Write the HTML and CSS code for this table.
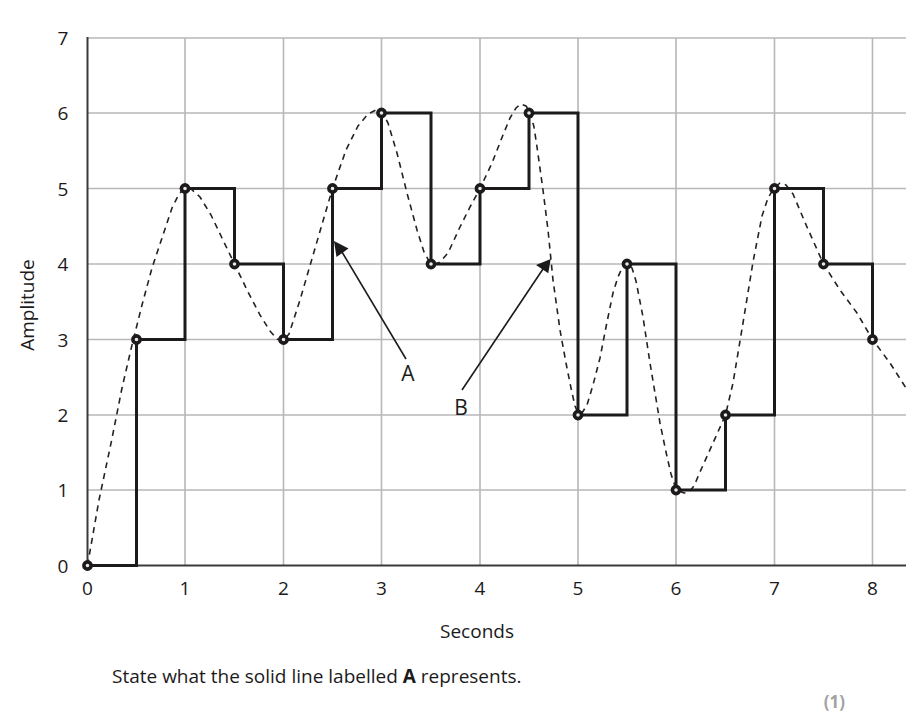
FILE: index.html
```html
<!DOCTYPE html>
<html lang="en">
<head>
<meta charset="utf-8">
<title>Sampling graph</title>
<link rel="stylesheet" href="styles.css">
</head>
<body>
<main class="sheet">
  <svg class="chart" width="922" height="604" viewBox="0 0 922 604" xmlns="http://www.w3.org/2000/svg">
    <g class="grid">
      <line x1="185" y1="38" x2="185" y2="565.5"/>
      <line x1="283.5" y1="38" x2="283.5" y2="565.5"/>
      <line x1="381.5" y1="38" x2="381.5" y2="565.5"/>
      <line x1="480" y1="38" x2="480" y2="565.5"/>
      <line x1="578" y1="38" x2="578" y2="565.5"/>
      <line x1="676" y1="38" x2="676" y2="565.5"/>
      <line x1="774.5" y1="38" x2="774.5" y2="565.5"/>
      <line x1="872.5" y1="38" x2="872.5" y2="565.5"/>
      <line x1="87.5" y1="38" x2="906" y2="38"/>
      <line x1="87.5" y1="113" x2="906" y2="113"/>
      <line x1="87.5" y1="188.5" x2="906" y2="188.5"/>
      <line x1="87.5" y1="264" x2="906" y2="264"/>
      <line x1="87.5" y1="339.5" x2="906" y2="339.5"/>
      <line x1="87.5" y1="415" x2="906" y2="415"/>
      <line x1="87.5" y1="490" x2="906" y2="490"/>
    </g>
    <g class="axes">
      <line x1="87.5" y1="37" x2="87.5" y2="566.5"/>
      <line x1="86.5" y1="565.5" x2="906" y2="565.5"/>
    </g>
    <g class="ytick">
      <text x="63" y="45">7</text>
      <text x="63" y="120">6</text>
      <text x="63" y="195.5">5</text>
      <text x="63" y="271">4</text>
      <text x="63" y="346.5">3</text>
      <text x="63" y="422">2</text>
      <text x="63" y="497">1</text>
      <text x="63" y="572.5">0</text>
    </g>
    <g class="xtick">
      <text x="87.5" y="595">0</text>
      <text x="185" y="595">1</text>
      <text x="283.5" y="595">2</text>
      <text x="381.5" y="595">3</text>
      <text x="480" y="595">4</text>
      <text x="578" y="595">5</text>
      <text x="676" y="595">6</text>
      <text x="774.5" y="595">7</text>
      <text x="872.5" y="595">8</text>
    </g>
    <text class="ytitle" x="0" y="0" transform="translate(34 305) rotate(-90)">Amplitude</text>
    <polyline class="analog" points="87.5,565.5 99,500 111.7,440 122,388 132,345 142,305 152,268 163,235 172,208 179,194 185,188 191,189 200,197 211,215 222,238 234.5,264 248,292 260,315 270,331 277,339 283,341 289,334 300,300 316,245 332.5,188.5 346,150 358,126 368,114 376,110 382,112 388,123 397,153 407,193 417,230 424,252 429,261 434,264.5 440,262 448,253 460,227 470,207 480,188.5 492,163 503,135 510,118 516,108 521,104 526,106 530,112 534,127 537,147 543,190 548,230 553,280 560,330 566,363 571,388 575,406 578,413 582,413 587,405 593,385 600,358 607,322 613,293 618,277 622,268 627,263 632,268 636,281 643,317 650,363 660,423 666,452 671,474 675,486 679,491 684,493 689,492 694,486 700,472 713,443 725.5,415 733,383 743,323 753,262 762,216 768,198 774,188 780,183 786,185 793,194 807,227 823.5,264 840,290 857,313 872.5,339.5 890,363 906,388"/>
    <path class="digital" d="M87.5 565.5 H136.5 V339.5 H185 V188.5 H234.5 V264 H283.5 V339.5 H332.5 V188.5 H381.5 V113 H431 V264 H480 V188.5 H529 V113 H578 V415 H627 V264 H676 V490 H725.5 V415 H774.5 V188.5 H823.5 V264 H872.5 V339.5"/>
    <g class="samples">
      <circle cx="87.5" cy="565.5" r="3.6"/>
      <circle cx="136.5" cy="339.5" r="3.6"/>
      <circle cx="185" cy="188.5" r="3.6"/>
      <circle cx="234.5" cy="264" r="3.6"/>
      <circle cx="283.5" cy="339.5" r="3.6"/>
      <circle cx="332.5" cy="188.5" r="3.6"/>
      <circle cx="381.5" cy="113" r="3.6"/>
      <circle cx="431" cy="264" r="3.6"/>
      <circle cx="480" cy="188.5" r="3.6"/>
      <circle cx="529" cy="113" r="3.6"/>
      <circle cx="578" cy="415" r="3.6"/>
      <circle cx="627" cy="264" r="3.6"/>
      <circle cx="676" cy="490" r="3.6"/>
      <circle cx="725.5" cy="415" r="3.6"/>
      <circle cx="774.5" cy="188.5" r="3.6"/>
      <circle cx="823.5" cy="264" r="3.6"/>
      <circle cx="872.5" cy="339.5" r="3.6"/>
    </g>
    <g class="pointer">
      <line x1="406" y1="359" x2="342" y2="252"/>
      <polygon points="334,241 348.5,248.5 336.5,257"/>
      <line x1="462" y1="390" x2="543" y2="269"/>
      <polygon points="550.7,259 536,265 548.3,273.3"/>
    </g>
    <text class="callout" x="408" y="381">A</text>
    <text class="callout" x="461" y="415">B</text>
  </svg>
  <div class="x-title">Seconds</div>
  <p class="question">State what the solid line labelled <b>A</b> represents.</p>
  <div class="marks">(1)</div>
</main>
</body>
</html>
```

FILE: styles.css
```css
html, body {
  margin: 0;
  padding: 0;
  background: #ffffff;
}

body {
  font-family: "Open Sans", "Noto Sans", sans-serif;
  font-weight: 500;
  color: #1c1a1b;
}

.sheet {
  width: 922px;
  height: 722px;
  overflow: hidden;
}

.chart {
  display: block;
}

.grid line {
  stroke: #b7b7ba;
  stroke-width: 1.6;
}

.axes line {
  stroke: #3a3a3a;
  stroke-width: 2;
}

.ytick text,
.xtick text {
  font-family: "Open Sans", "Noto Sans", sans-serif;
  font-size: 19px;
  font-weight: 500;
  fill: #1c1a1b;
  text-anchor: middle;
}

.ytitle {
  font-family: "Open Sans", "Noto Sans", sans-serif;
  font-size: 19px;
  font-weight: 500;
  fill: #1c1a1b;
  text-anchor: middle;
}

.analog {
  fill: none;
  stroke: #222222;
  stroke-width: 1.6;
  stroke-dasharray: 6 5;
  stroke-linejoin: round;
}

.digital {
  fill: none;
  stroke: #1c1a1b;
  stroke-width: 3;
  stroke-linejoin: miter;
  stroke-linecap: square;
}

.samples circle {
  fill: #e8e8e8;
  stroke: #1c1a1b;
  stroke-width: 3.6;
}

.pointer line {
  stroke: #1c1a1b;
  stroke-width: 1.6;
}

.pointer polygon {
  fill: #1c1a1b;
}

.callout {
  font-family: "Open Sans", "Noto Sans", sans-serif;
  font-size: 21px;
  font-weight: 500;
  fill: #1c1a1b;
  text-anchor: middle;
}

.x-title {
  margin-top: 15px;
  padding-left: 32px;
  text-align: center;
  font-size: 19px;
  line-height: 24px;
}

.question {
  margin: 21px 0 0 112px;
  font-size: 19px;
  line-height: 24px;
}

.question b {
  font-weight: 700;
}

.marks {
  margin-top: 4px;
  padding-right: 77px;
  text-align: right;
  font-size: 17px;
  line-height: 20px;
  font-weight: 700;
  color: #a3a3a3;
}
```
